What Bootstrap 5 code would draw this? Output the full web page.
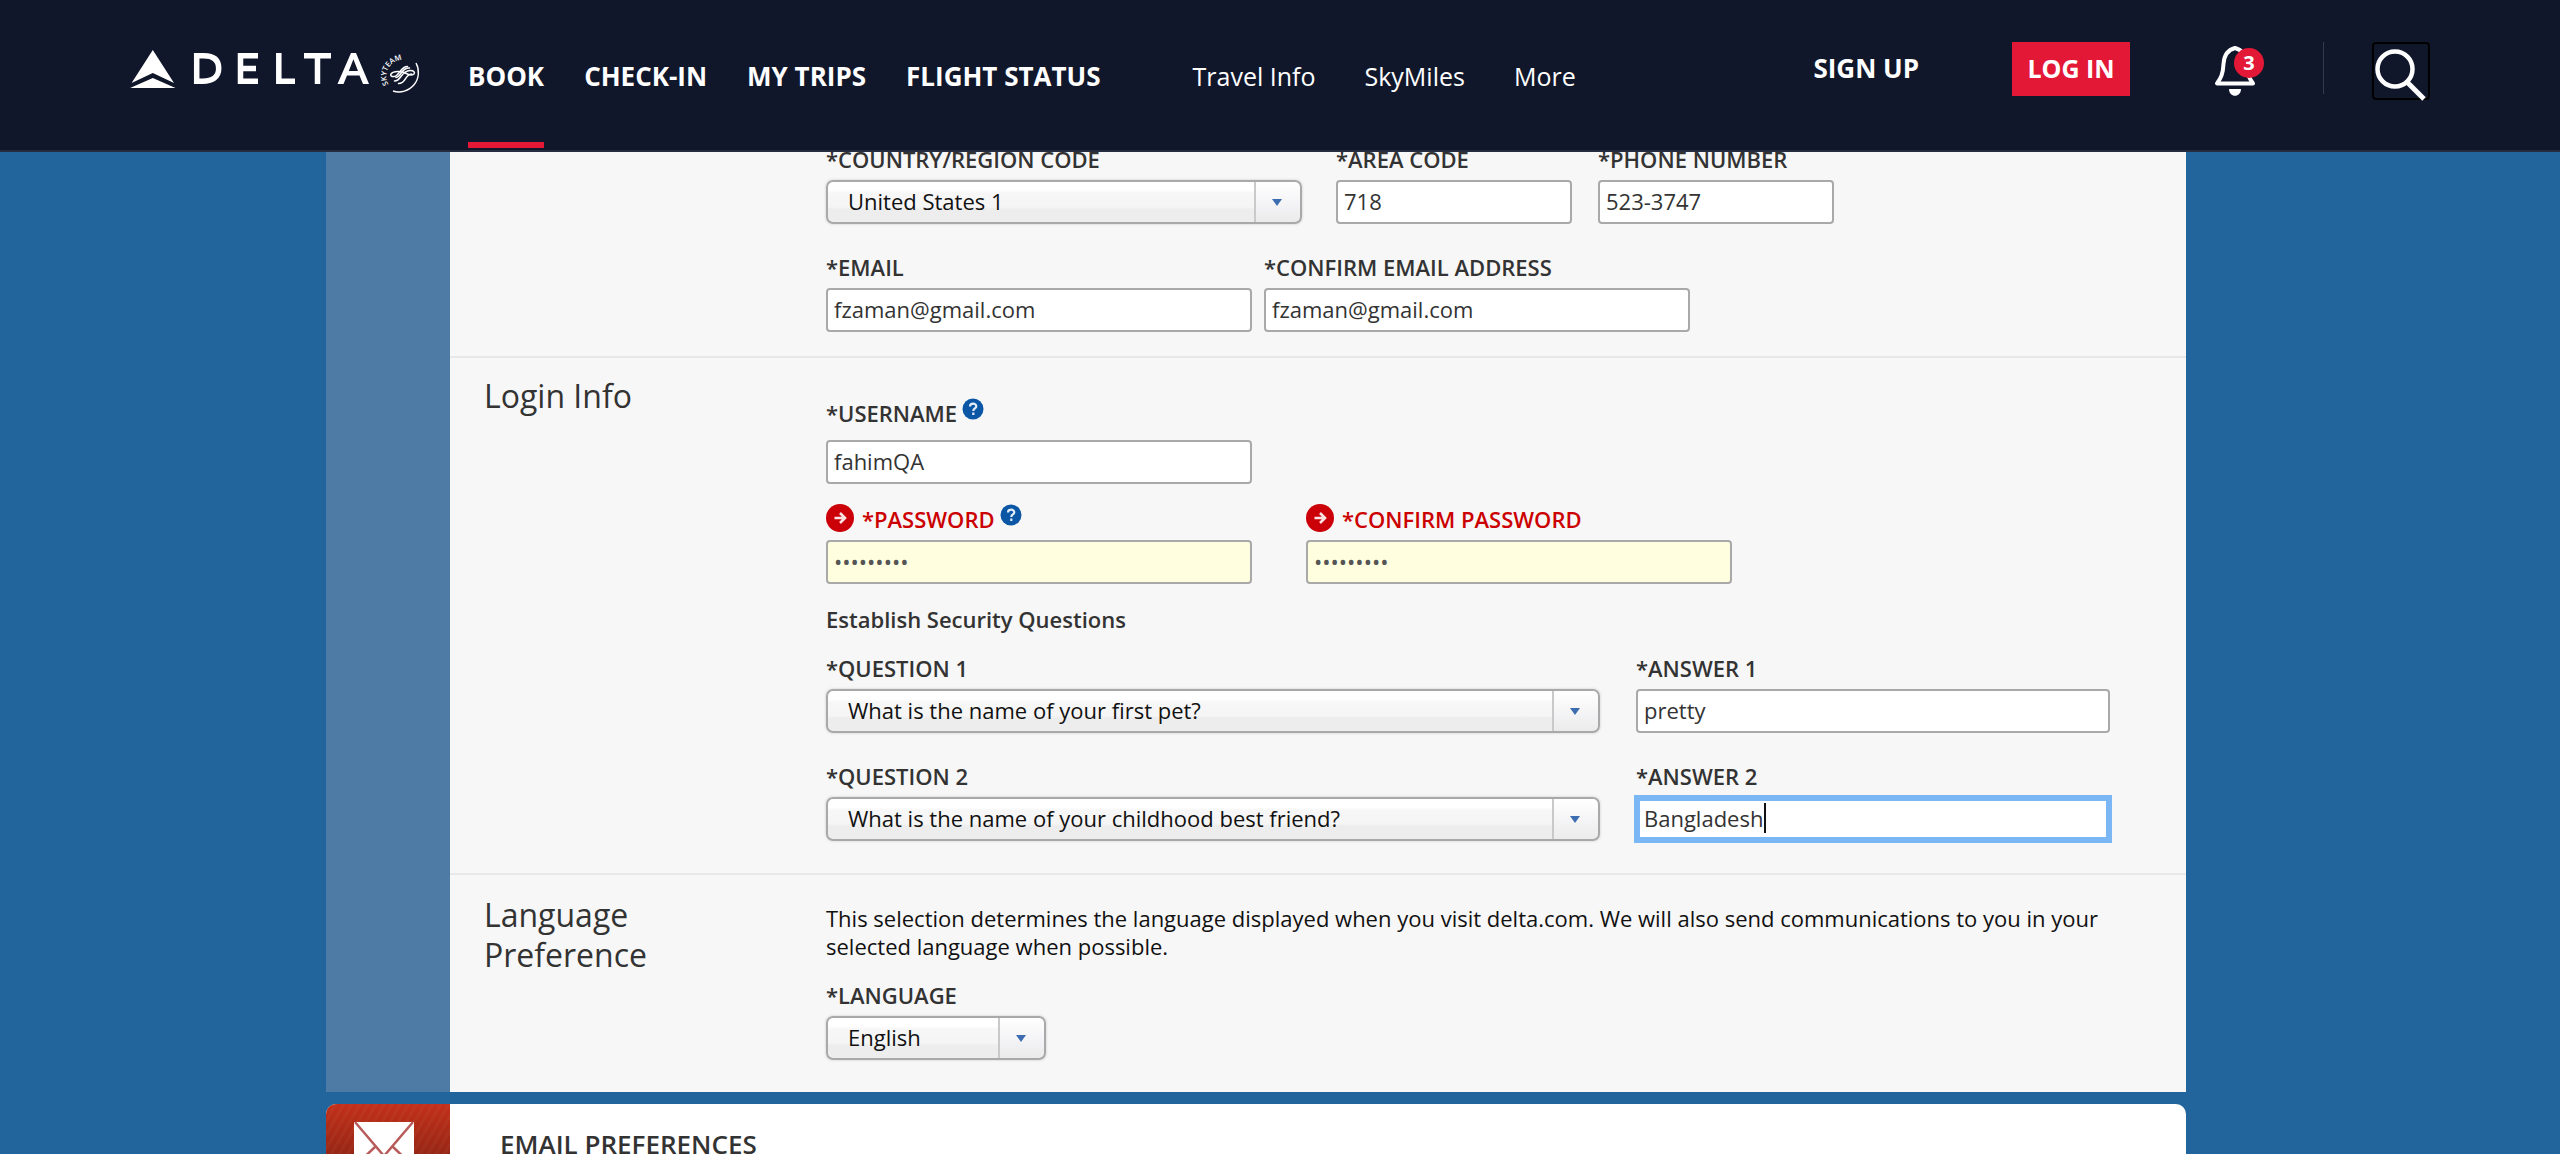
<!DOCTYPE html>
<html lang="en">
<head>
<meta charset="utf-8">
<meta name="viewport" content="width=device-width, initial-scale=1">
<title>Delta - Sign Up</title>
<link href="https://cdn.jsdelivr.net/npm/bootstrap@5.3.0/dist/css/bootstrap.min.css" rel="stylesheet">
<style>
body { font-family: "Open Sans", sans-serif; font-size: 22px; line-height: 28px; background: #21659c; color: #333; }
.site-header { background: #11172b; border-bottom: 2px solid #252b41; font-size: 26px; height: 152px; padding: 0 130px; z-index: 10; }
.site-header a { color: #fff; text-decoration: none; white-space: nowrap; }
.brand-link { width: 338px; padding-top: 48px; }
.nav-main { gap: 40px; font-weight: 700; }
.nav-more { gap: 49px; margin-left: 92px; font-size: 25px; }
.nav-main a, .nav-more a { line-height: 32px; padding-top: 60px; height: 148px; border-bottom: 6px solid transparent; }
.nav-main a.active { border-bottom-color: #e31837; }
.header-tools { padding-top: 42px; }
.header-tools .signup { font-weight: 700; line-height: 52px; margin-right: 93px; }
.login-btn { background: #e31837; color: #fff; font-weight: 700; font-size: 25px; line-height: 52px; border: 0; width: 118px; height: 54px; padding: 0 0 2px; margin-right: 84px; }
.bell-link { width: 50px; height: 54px; margin-right: 59px; }
.alert-count { left: 20px; top: 6px; width: 30px; height: 30px; line-height: 30px; border-radius: 50%; background: #e31837; font-size: 20px; font-weight: 700; text-align: center; }
.tool-rule { width: 1px; height: 52px; background: #343a4c; margin-right: 48px; }
.search-btn { width: 58px; height: 58px; background: transparent; border: 2px solid #000; border-radius: 4px; padding: 0; }
.search-btn svg { display: block; overflow: visible; }
.page-wrap { max-width: 1908px; padding-right: 48px; width: 100%; }
.side-strip { width: 124px; background: #4e7ba5; flex: none; }
.panel { background: #f7f7f7; }
.form-part { border-bottom: 2px solid #e8e8e8; }
.form-part:last-child { border-bottom: 0; }
.part-title { width: 376px; flex: none; padding: 18px 120px 0 34px; }
.form-part:last-child .part-title { padding-top: 20px; }
.part-title h2 { font-size: 32px; line-height: 40px; margin: 0; font-weight: 400; }
.part-contact { padding: 145px 0 24px; }
.part-login { padding: 41px 0 32px; }
.part-language { padding: 29px 0 32px; }
.field-row { gap: 36px; }
.field-row + .field-row { margin-top: 29px; }
.field-row.tight { margin-top: 21px; }
.field-row.gap-mail { gap: 12px; }
.field-row.gap-pass { gap: 54px; }
.before-area { margin-right: -2px; }
.after-area { margin-left: -10px; }
.field-label { display: flex; font-weight: 600; line-height: 28px; margin-bottom: 7px; }
.field-label.spaced { margin-bottom: 13px; }
.field-error { color: #cc0000; }
.err-icon { margin: -1px 8px 0 0; }
.sub-title { font-weight: 600; margin: 21px 0 0; }
.ctl, .pick { height: 44px; width: 100%; border: 2px solid #a9a9a9; font-size: 22px; line-height: 28px; display: block; }
.ctl { border-radius: 4px; padding: 5px 6px 7px; color: #333; background: #fff; }
.ctl:focus { outline: 0; }
.ctl.bad { background: #ffffe0; color: #555; }
.ctl.focused { border-color: #7bb7f5; box-shadow: 0 0 0 2px #7bb7f5, inset 0 0 0 2px #7bb7f5; border-radius: 0; }
.pick { appearance: none; border-radius: 7px; padding: 5px 52px 7px 20px; color: #111; box-shadow: 0 0 2px 1px #e2e2e2;
  background:
    url("data:image/svg+xml,%3Csvg xmlns='http://www.w3.org/2000/svg' width='10' height='7'%3E%3Cpath d='M0 0h10L5 7z' fill='%233c6db0'/%3E%3C/svg%3E") right 18px center / 10px 7px no-repeat,
    linear-gradient(#c9c9c9, #c9c9c9) right 44px top / 2px 100% no-repeat,
    linear-gradient(#fff, #f3f3f5 60%, #ebebeb) right top / 44px 100% no-repeat,
    linear-gradient(#fff 0, #fff 20%, #f7f7f7 28%, #f5f5f5 62%, #ededed 68%, #ededed 100%); }
.w-country { width: 476px; } .w-short { width: 236px; } .w-mid { width: 426px; }
.w-question { width: 774px; } .w-answer { width: 474px; } .w-language { width: 220px; }
.caret { width: 2px; height: 30px; left: 128px; top: 6px; background: #111; }
.intro { color: #111; max-width: 1290px; }
.next-card { margin-top: 12px; border-radius: 10px 10px 0 0; background: #fff; overflow: hidden; }
.mail-tile { width: 124px; flex: none; padding: 16px 28px 0; background: repeating-linear-gradient(120deg, rgba(255,255,255,.03) 0 3px, transparent 3px 7px), linear-gradient(#c2301a 0, #8e2413 60px); }
.next-card h2 { font-size: 26px; font-weight: 600; line-height: 34px; padding: 23px 0 0 50px; margin: 0; }
.help-btn { border: 0; padding: 0; background: none; width: 22px; height: 22px; line-height: 0; margin: -1px 0 0 5px; }
</style>
<script src="https://cdn.jsdelivr.net/npm/bootstrap@5.3.0/dist/js/bootstrap.bundle.min.js"></script>
</head>
<body class="vh-100 overflow-hidden d-flex flex-column">
<svg class="d-none">
  <symbol id="help" viewBox="0 0 22 22"><circle cx="11" cy="11" r="10.5" fill="#0b57a6"/><path d="M8 8.600c0-4 6.300-3.800 6.300-.4 0 2.400-3 2.200-3 4.800M11.300 14.600v2.400" fill="none" stroke="#e4edf7" stroke-width="2.200"/></symbol>
  <symbol id="err" viewBox="0 0 28 28"><circle cx="14" cy="14" r="14" fill="#cc0009"/><path d="M8.500 14h10M14 9l5 5-5 5" fill="none" stroke="#fbe3e4" stroke-width="2.600"/></symbol>
</svg>

<header class="site-header fixed-top d-flex align-items-start">
  <a class="brand-link flex-shrink-0" href="#" aria-label="Delta SkyTeam">
    <svg class="d-block" width="294" height="48" viewBox="130 48 294 48" fill="#fff">
      <path d="M152.800 50l21.200 33-21.200-10-21.200 10zM152.800 78l22.700 10h-45.400z"/>
      <g fill="none" stroke="#fff" stroke-width="5.500">
        <path d="M196.700 55.800v25.400h6c9 0 16-3.500 16-12.700s-6-12.700-15-12.700zM258 55.800h-17.500v25.400H258M240.500 68.500H256M278.800 53v28.200H295M304 55.800h27M317.500 55.800V84"/>
      </g>
      <path d="M351 53h5l13 31h-6l-3.500-8.500h-12.500L343.500 84h-6zM348.800 71h9.200l-4.600-11.700z"/>
      <path d="M416 63A19.500 19.500 0 0 1 393 91" fill="none" stroke="#fff" stroke-width="1.400"/>
      <g fill="none" stroke="#fff" stroke-width="1.500" stroke-linecap="round">
        <path d="M394.500 81c7 0 6-10 15.500-10.500 3-.2 5.500 1.500 4 3.500-3 3-7-1-12-2-5-.8-9-.5-11 2-1.500 2.500 3 3.500 5.500 1.500 4-3 5-9 11-9"/>
        <path d="M396 77.500c6-1 5-10 13.500-9.500M398.500 83.500c8 0 6-9 13-9.500"/>
      </g>
      <path id="ring" d="M388.500 84.500A15.500 15.500 0 0 1 417 68" fill="none"/>
      <text font-family="Open Sans, sans-serif" font-size="7.500" font-weight="600"><textPath href="#ring">SKYTEAM</textPath></text>
    </svg>
  </a>
  <nav class="nav-main d-flex" aria-label="Main">
    <a class="active" href="#">BOOK</a><a href="#">CHECK-IN</a><a href="#">MY TRIPS</a><a href="#">FLIGHT STATUS</a>
  </nav>
  <nav class="nav-more d-flex" aria-label="More">
    <a href="#">Travel Info</a><a href="#">SkyMiles</a><a href="#">More</a>
  </nav>
  <div class="header-tools d-flex align-items-start ms-auto">
    <a class="signup" href="#">SIGN UP</a>
    <button class="login-btn" type="button">LOG IN</button>
    <a class="bell-link position-relative d-block" href="#" aria-label="Notifications">
      <svg width="42" height="54" viewBox="0 0 42 54"><path d="M21 6C13 8 10 14 9.500 22 9 32 7 36 3 41.500h36C35 36 33 32 32.500 22 32 14 29 8 21 6z" fill="none" stroke="#fff" stroke-width="4" stroke-linejoin="round"/><path d="M17 8a4.500 6 0 0 1 8 0zM15 47h12c0 9-12 9-12 0z" fill="#fff"/></svg>
      <span class="alert-count position-absolute">3</span>
    </a>
    <span class="tool-rule"></span>
    <button class="search-btn" type="button" aria-label="Search"><svg width="54" height="54" viewBox="0 0 54 54" fill="none" stroke="#fff"><circle cx="21" cy="25" r="17.500" stroke-width="4.500"/><path d="M33 38l17 17" stroke-width="5"/></svg></button>
  </div>
</header>

<main class="page-wrap mx-auto d-flex flex-column flex-grow-1">
  <form class="d-flex">
    <div class="side-strip"></div>
    <div class="panel flex-grow-1">
      <section class="form-part d-flex">
        <div class="part-title"></div>
        <div class="part-contact flex-grow-1">
          <div class="field-row d-flex">
            <div class="w-country before-area"><label class="field-label" for="country">*COUNTRY/REGION CODE</label>
              <select class="pick" id="country"><option>United States 1</option></select></div>
            <div class="w-short"><label class="field-label" for="area">*AREA CODE</label><input class="ctl" id="area" value="718"></div>
            <div class="w-short after-area"><label class="field-label" for="phone">*PHONE NUMBER</label><input class="ctl" id="phone" value="523-3747"></div>
          </div>
          <div class="field-row gap-mail d-flex">
            <div class="w-mid"><label class="field-label" for="email">*EMAIL</label><input class="ctl" id="email" value="fzaman@gmail.com"></div>
            <div class="w-mid"><label class="field-label" for="email2">*CONFIRM EMAIL ADDRESS</label><input class="ctl" id="email2" value="fzaman@gmail.com"></div>
          </div>
        </div>
      </section>
      <section class="form-part d-flex">
        <div class="part-title"><h2>Login Info</h2></div>
        <div class="part-login flex-grow-1">
          <div class="w-mid">
            <div class="field-label spaced"><label for="user">*USERNAME</label><button class="help-btn" type="button" aria-label="Username help"><svg width="22" height="22"><use href="#help"/></svg></button></div>
            <input class="ctl" id="user" value="fahimQA">
          </div>
          <div class="field-row tight gap-pass d-flex">
            <div class="w-mid">
              <div class="field-label field-error"><svg class="err-icon" width="28" height="28"><use href="#err"/></svg><label for="pw">*PASSWORD</label><button class="help-btn" type="button" aria-label="Password help"><svg width="22" height="22"><use href="#help"/></svg></button></div>
              <input class="ctl bad" type="password" id="pw" value="delta1234">
            </div>
            <div class="w-mid">
              <div class="field-label field-error"><svg class="err-icon" width="28" height="28"><use href="#err"/></svg><label for="pw2">*CONFIRM PASSWORD</label></div>
              <input class="ctl bad" type="password" id="pw2" value="delta1234">
            </div>
          </div>
          <p class="sub-title">Establish Security Questions</p>
          <div class="field-row tight d-flex">
            <div class="w-question"><label class="field-label" for="q1">*QUESTION 1</label><select class="pick" id="q1"><option>What is the name of your first pet?</option></select></div>
            <div class="w-answer"><label class="field-label" for="a1">*ANSWER 1</label><input class="ctl" id="a1" value="pretty"></div>
          </div>
          <div class="field-row d-flex">
            <div class="w-question"><label class="field-label" for="q2">*QUESTION 2</label><select class="pick" id="q2"><option>What is the name of your childhood best friend?</option></select></div>
            <div class="w-answer"><label class="field-label" for="a2">*ANSWER 2</label>
              <div class="position-relative"><input class="ctl focused" id="a2" value="Bangladesh"><span class="caret position-absolute"></span></div></div>
          </div>
        </div>
      </section>
      <section class="form-part d-flex">
        <div class="part-title"><h2>Language Preference</h2></div>
        <div class="part-language flex-grow-1">
          <p class="intro mb-0">This selection determines the language displayed when you visit delta.com. We will also send communications to you in your selected language when possible.</p>
          <div class="field-row tight w-language"><label class="field-label" for="lang">*LANGUAGE</label><select class="pick" id="lang"><option>English</option></select></div>
        </div>
      </section>
    </div>
  </form>
  <section class="next-card d-flex flex-grow-1">
    <div class="mail-tile"><svg class="d-block" width="68" height="46" viewBox="0 0 68 46"><path d="M0 2h60v44H0z" fill="#fff"/><path d="M1 2l29 34L59 2M1 46l21-20M59 46L38 26" fill="none" stroke="#b85c5c" stroke-width="2.500"/></svg></div>
    <h2>EMAIL PREFERENCES</h2>
  </section>
</main>
</body>
</html>
